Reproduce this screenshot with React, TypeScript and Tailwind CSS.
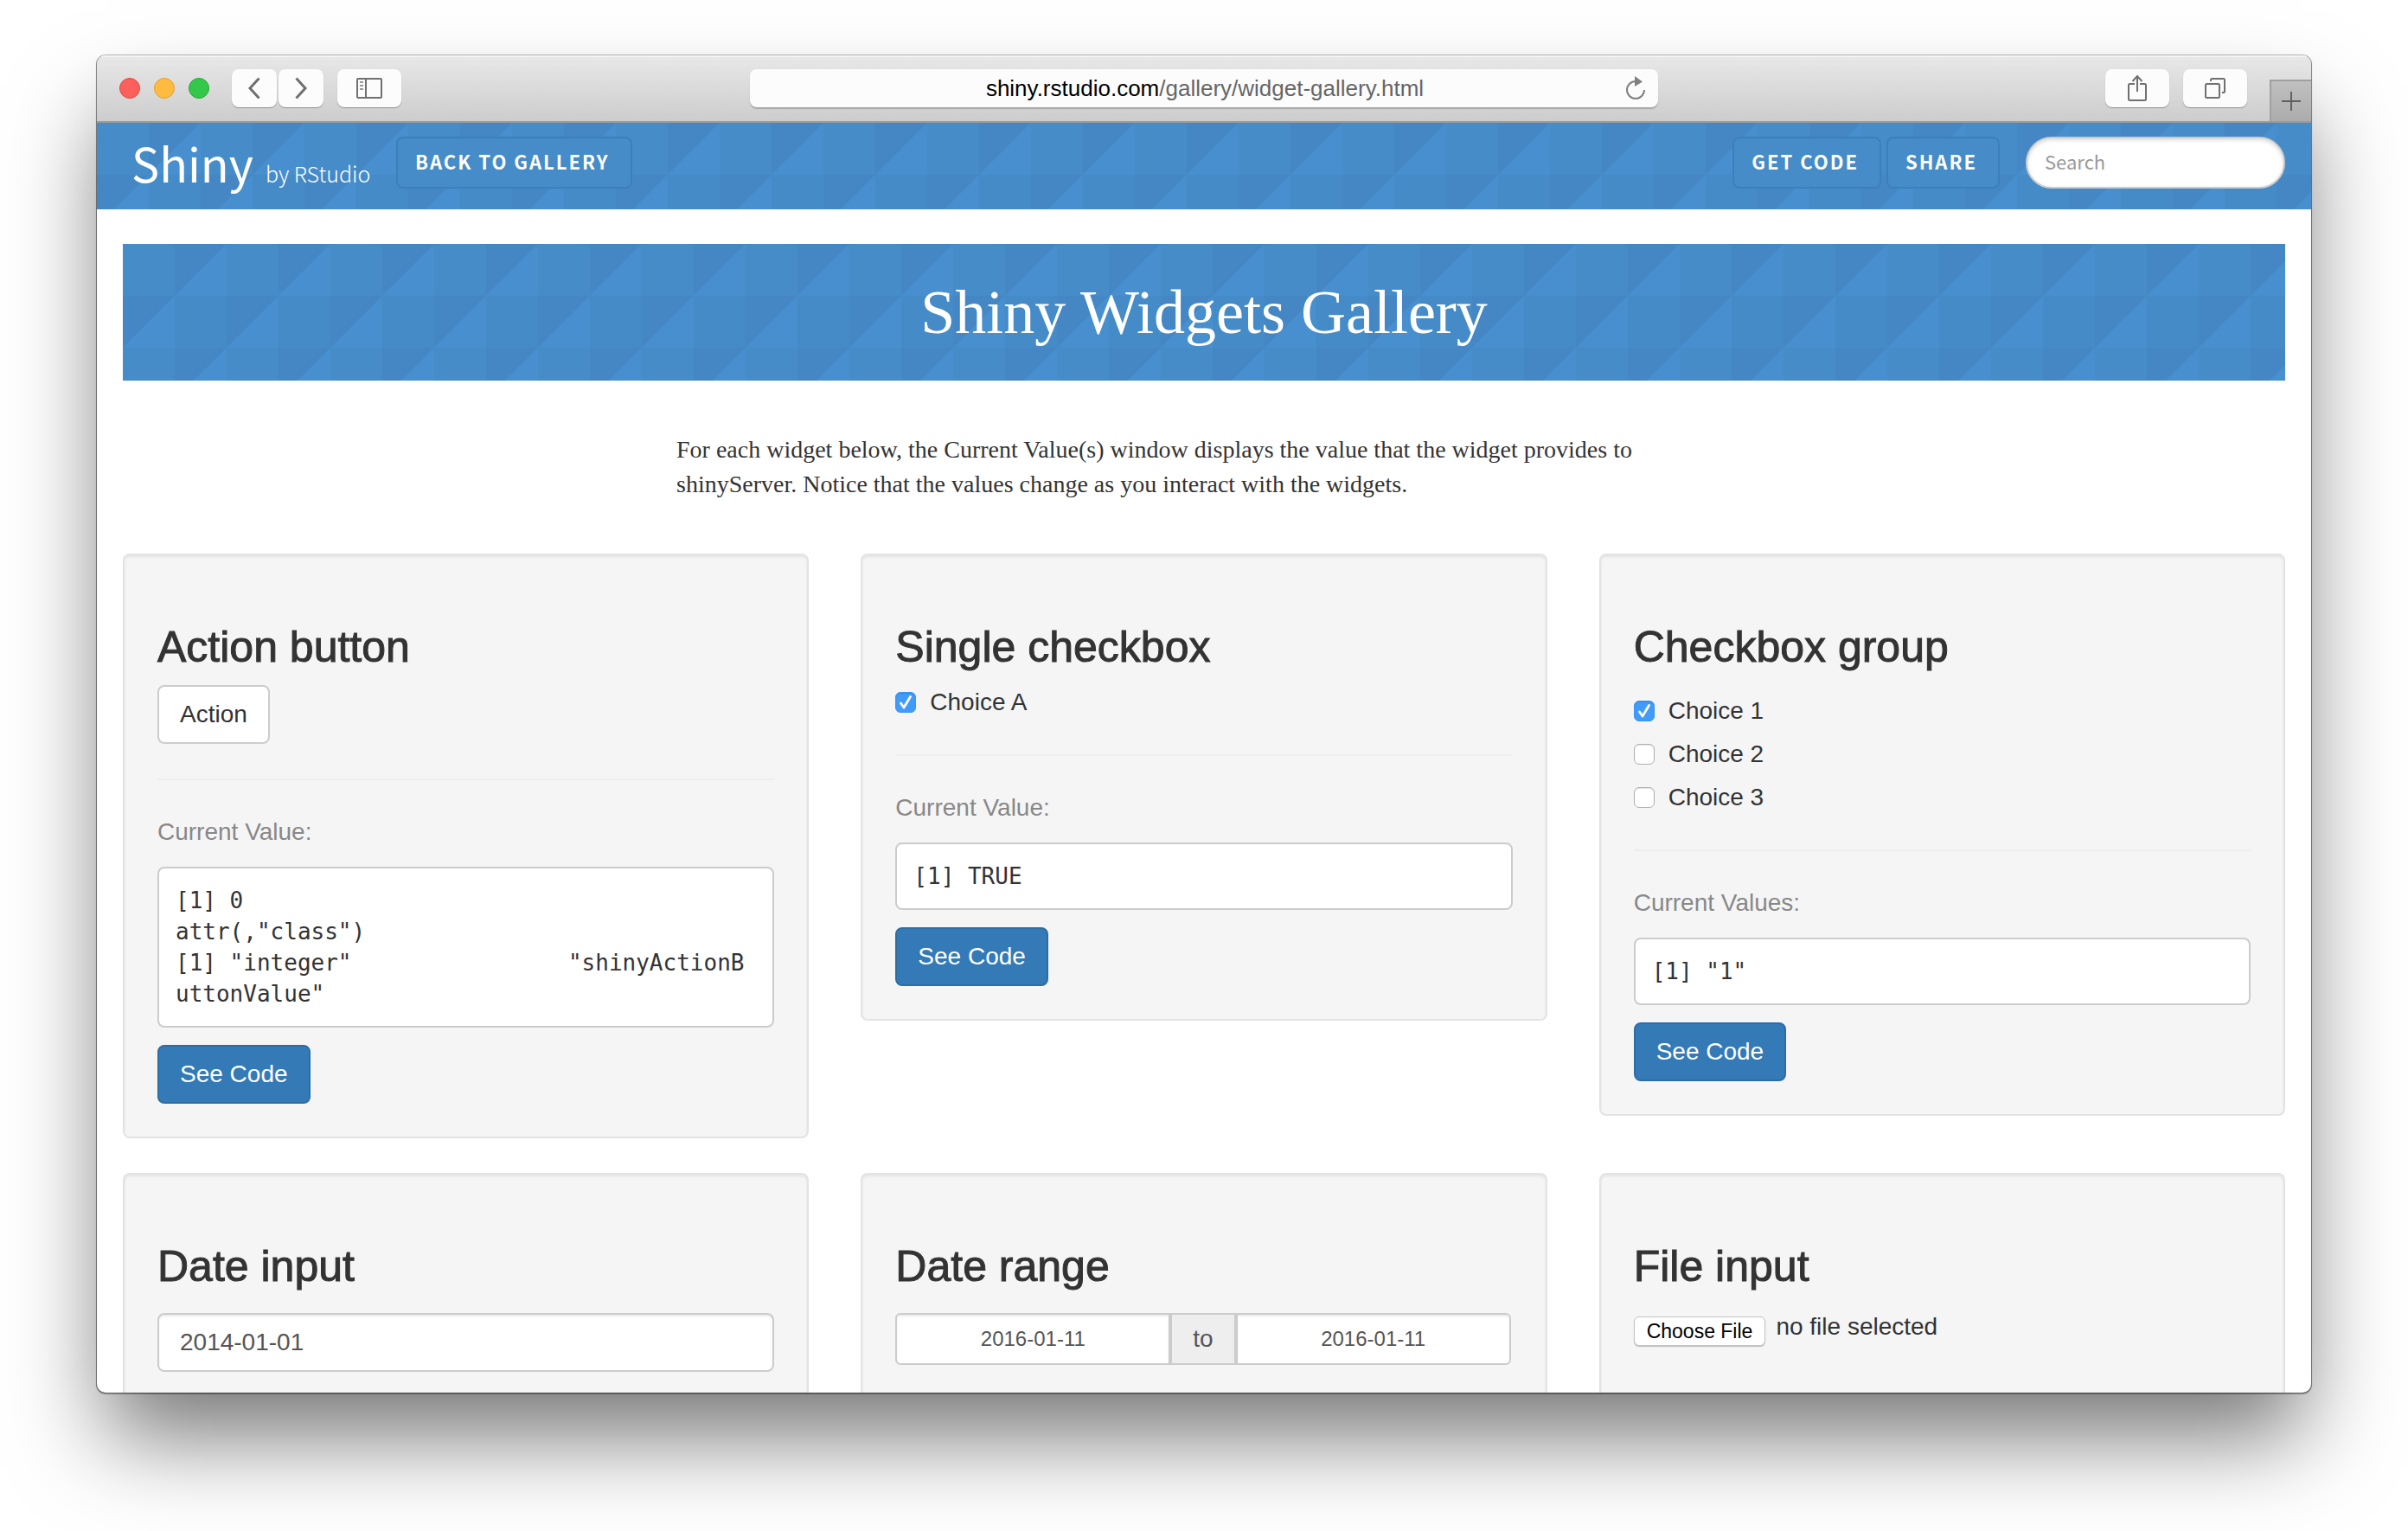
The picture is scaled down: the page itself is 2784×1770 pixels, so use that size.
import React, { useId } from "react";

const BRAND_FONT = "font-['Noto_Sans_CJK_SC','Open_Sans',sans-serif]";

/** Triangular tile texture used behind the nav bar and the page banner. */
function TriangleTexture() {
  const id = useId();
  return (
    <svg aria-hidden="true" className="absolute inset-0 size-full">
      <defs>
        <pattern id={id} width="120" height="120" patternUnits="userSpaceOnUse">
          <rect width="120" height="120" fill="#458cc8" />
          <rect x="60" y="60" width="60" height="60" fill="#448bc7" />
          <path d="M60 0H120L60 60Z" fill="#4587c4" />
          <path d="M120 0V60H60Z" fill="#478fce" />
          <path d="M0 60H60L0 120Z" fill="#4587c4" />
          <path d="M60 60V120H0Z" fill="#478fce" />
        </pattern>
      </defs>
      <rect width="100%" height="100%" fill={`url(#${id})`} />
    </svg>
  );
}

function ToolbarButton({
  label,
  className,
  children,
}: {
  label: string;
  className: string;
  children: React.ReactNode;
}) {
  return (
    <button
      type="button"
      aria-label={label}
      className={`flex h-11 items-center justify-center rounded-lg bg-[#fcfcfc] text-[#707070] shadow-[0_1px_1px_rgba(0,0,0,0.3)] ${className}`}
    >
      {children}
    </button>
  );
}

function BrowserToolbar() {
  return (
    <header className="grid h-[78px] shrink-0 grid-cols-[1fr_41%_1fr] items-center border-b-2 border-[#9b9b9b] bg-linear-to-b from-[#e8e8e8] to-[#cdcdcd] shadow-[inset_0_2px_0_#f4f4f4]">
      <div className="flex items-center pl-[26px]">
        <div className="flex gap-4">
          <span className="size-6 rounded-full border border-[#e14640] bg-[#fc605c]" />
          <span className="size-6 rounded-full border border-[#dfa033] bg-[#fdbc40]" />
          <span className="size-6 rounded-full border border-[#27a833] bg-[#34c84a]" />
        </div>
        <div className="ml-[26px] flex gap-0.5">
          <ToolbarButton label="Back" className="w-[52px]">
            <svg width="16" height="26" viewBox="0 0 16 26" fill="none" stroke="currentColor" strokeWidth="3">
              <path d="M13.500 1.500L3 13L13.500 24.500" />
            </svg>
          </ToolbarButton>
          <ToolbarButton label="Forward" className="w-[52px]">
            <svg width="16" height="26" viewBox="0 0 16 26" fill="none" stroke="currentColor" strokeWidth="3">
              <path d="M2.500 1.500L13 13L2.500 24.500" />
            </svg>
          </ToolbarButton>
        </div>
        <ToolbarButton label="Show sidebar" className="ml-4 w-[74px]">
          <svg width="30" height="24" viewBox="0 0 30 24" fill="none" stroke="currentColor" strokeWidth="2">
            <rect x="1" y="1" width="28" height="22" rx="1" />
            <path d="M11 1V23" />
            <path d="M4 5H8M4 9H8M4 13H8" strokeOpacity="0.7" />
          </svg>
        </ToolbarButton>
      </div>

      <div className="flex h-11 items-center rounded-lg bg-[#fcfcfc] pl-10 pr-3.5 shadow-[0_2px_1px_rgba(0,0,0,0.2)]">
        <a
          href="#top"
          className="flex-1 text-center font-['Liberation_Sans',Arial,sans-serif] text-[26px] leading-8 text-[#666]"
        >
          <span className="text-black">shiny.rstudio.com</span>/gallery/widget-gallery.html
        </a>
        <button type="button" aria-label="Reload" className="text-[#808080]">
          <svg width="24" height="28" viewBox="0 0 24 28" fill="none" stroke="currentColor" strokeWidth="2">
            <path d="M12 6A10 10 0 1 0 22 16" />
            <path d="M11 0L20 6.500L11 12Z" fill="currentColor" stroke="none" />
          </svg>
        </button>
      </div>

      <div className="flex h-full items-center justify-end">
        <ToolbarButton label="Share page" className="w-[74px]">
          <svg width="22" height="32" viewBox="0 0 22 32" fill="none" stroke="currentColor" strokeWidth="2">
            <path d="M8 11H2.500A1.500 1.500 0 0 0 1 12.500V28.500A1.500 1.500 0 0 0 2.500 30H19.500A1.500 1.500 0 0 0 21 28.500V12.500A1.500 1.500 0 0 0 19.500 11H14" />
            <path d="M11 20V2M5.500 8L11 2L16.500 8" />
          </svg>
        </ToolbarButton>
        <ToolbarButton label="Show all tabs" className="ml-4 w-[74px]">
          <svg width="26" height="26" viewBox="0 0 26 26" fill="none" stroke="currentColor" strokeWidth="2">
            <rect x="2" y="8" width="16" height="16" rx="1.500" />
            <path d="M8 5V3.500A1.500 1.500 0 0 1 9.500 2H22.500A1.500 1.500 0 0 1 24 3.500V16.500A1.500 1.500 0 0 1 22.500 18H21" />
          </svg>
        </ToolbarButton>
        <button
          type="button"
          aria-label="New tab"
          className="ml-[26px] flex size-12 items-center justify-center self-end border-l-2 border-t-2 border-[#a0a0a0] bg-linear-to-b from-[#c0c0c0] to-[#acacac] text-[#606060]"
        >
          <svg width="22" height="22" viewBox="0 0 22 22" stroke="currentColor" strokeWidth="2">
            <path d="M11 0V22M0 11H22" />
          </svg>
        </button>
      </div>
    </header>
  );
}

function NavButton({ children }: { children: React.ReactNode }) {
  return (
    <a
      href="#gallery"
      className={`flex h-15 items-center rounded-lg border-2 border-[#3b80bd] bg-[#458cc8] pb-1 pl-5 pr-6 text-[22px] font-bold leading-8 tracking-[2px] text-white ${BRAND_FONT}`}
    >
      {children}
    </a>
  );
}

function SiteNav() {
  return (
    <nav className="relative h-[100px] shrink-0">
      <TriangleTexture />
      <div className="relative flex items-start pl-10 pr-[30px] pt-4">
        <a href="#home" className={`flex w-[276px] items-baseline gap-3.5 whitespace-nowrap text-white ${BRAND_FONT}`}>
          <span className="text-[54px] leading-15">Shiny</span>
          <span className="text-[25px] font-light leading-8">by RStudio</span>
        </a>
        <div className="ml-[30px] flex flex-1 gap-1.5">
          <NavButton>BACK TO GALLERY</NavButton>
          <div className="flex-1" />
          <NavButton>GET CODE</NavButton>
          <NavButton>SHARE</NavButton>
          <input
            type="search"
            aria-label="Search"
            placeholder="Search"
            className={`ml-6 h-15 w-[300px] rounded-full border-2 border-[#ccc] bg-white px-5 pb-1 text-[22px] leading-8 text-[#555] shadow-[inset_0_2px_4px_rgba(0,0,0,0.15)] placeholder:text-[#999] ${BRAND_FONT}`}
          />
        </div>
      </div>
    </nav>
  );
}

function Card({
  title,
  cropped = false,
  children,
}: {
  title: string;
  cropped?: boolean;
  children: React.ReactNode;
}) {
  return (
    <section
      className={`border-2 border-[#e3e3e3] bg-[#f5f5f5] p-[38px] shadow-[inset_0_2px_3px_rgba(0,0,0,0.07)] ${
        cropped ? "h-full rounded-t-lg border-b-0" : "rounded-lg"
      }`}
    >
      <h3 className="mt-11 text-[50px] leading-12 text-[#333] [-webkit-text-stroke:1px_#333]">{title}</h3>
      {children}
    </section>
  );
}

function CurrentValue({ label = "Current Value:", output }: { label?: string; output: string }) {
  return (
    <>
      <hr className="my-10 border-t-2 border-[#eee]" />
      <p className="mb-5 text-[#888]">{label}</p>
      <pre className="mb-5 whitespace-pre-wrap break-all rounded-lg border-2 border-[#ccc] bg-white p-[19px] font-['DejaVu_Sans_Mono',monospace] text-[26px] leading-9 text-[#333]">
        {output}
      </pre>
      <button
        type="button"
        className="h-[68px] rounded-lg border-2 border-[#2e6da4] bg-[#337ab7] px-6 text-white"
      >
        See Code
      </button>
    </>
  );
}

function Checkbox({ label, checked = false }: { label: string; checked?: boolean }) {
  return (
    <label className="flex h-10 items-center gap-4">
      <span className="grid size-6 place-items-center">
        <input
          type="checkbox"
          defaultChecked={checked}
          className="peer col-start-1 row-start-1 size-6 appearance-none rounded-md border border-[#b0b0b0] bg-white shadow-[inset_0_1px_1px_rgba(0,0,0,0.12)] checked:border-[#3b94f8] checked:bg-[#419bf9]"
        />
        <svg
          aria-hidden="true"
          width="16"
          height="18"
          viewBox="0 0 16 18"
          fill="none"
          stroke="#fff"
          strokeWidth="2.800"
          strokeLinecap="round"
          strokeLinejoin="round"
          className="pointer-events-none col-start-1 row-start-1 hidden peer-checked:block"
        >
          <path d="M2.500 10L6 15L13.500 2.500" />
        </svg>
      </span>
      <span>{label}</span>
    </label>
  );
}

const ACTION_OUTPUT = `[1] 0
attr(,"class")
[1] "integer"                "shinyActionButtonValue"`;

const RANGE_INPUT =
  "h-15 min-w-0 flex-1 border-2 border-[#ccc] bg-white text-center text-2xl text-[#555] shadow-[inset_0_2px_2px_rgba(0,0,0,0.075)]";

export default function App() {
  return (
    <div className="flex h-screen flex-col bg-white px-28 pb-40 pt-16">
      <div className="flex min-h-0 flex-1 flex-col overflow-hidden rounded-[10px] bg-white shadow-[0_0_0_1px_rgba(0,0,0,0.25),0_1px_1px_1px_rgba(0,0,0,0.3),0_60px_100px_-10px_rgba(0,0,0,0.54)]">
        <BrowserToolbar />
        <SiteNav />
        <main
          id="gallery"
          className="flex min-h-0 flex-1 flex-col px-[30px] pt-10 font-['Liberation_Sans',Arial,sans-serif] text-[28px] leading-10 text-[#333]"
        >
          <div className="relative shrink-0">
            <TriangleTexture />
            <h1 className="relative py-10 text-center font-['Liberation_Serif','Times_New_Roman',serif] text-[72px] leading-[78px] text-white">
              Shiny Widgets Gallery
            </h1>
          </div>

          <p className="mx-auto my-15 w-[1220px] max-w-full font-['Liberation_Serif','Times_New_Roman',serif]">
            For each widget below, the Current Value(s) window displays the value that the widget provides to
            shinyServer. Notice that the values change as you interact with the widgets.
          </p>

          <div className="grid shrink-0 grid-cols-3 items-start gap-[60px]">
            <Card title="Action button">
              <button
                type="button"
                className="mt-5 block h-[68px] rounded-lg border-2 border-[#ccc] bg-white px-6"
              >
                Action
              </button>
              <CurrentValue output={ACTION_OUTPUT} />
            </Card>
            <Card title="Single checkbox">
              <div className="mt-5">
                <Checkbox label="Choice A" checked />
              </div>
              <CurrentValue output="[1] TRUE" />
            </Card>
            <Card title="Checkbox group">
              <div className="mt-[30px] flex flex-col gap-2.5">
                <Checkbox label="Choice 1" checked />
                <Checkbox label="Choice 2" />
                <Checkbox label="Choice 3" />
              </div>
              <CurrentValue label="Current Values:" output={'[1] "1"'} />
            </Card>
          </div>

          <div className="mt-10 grid min-h-0 flex-1 grid-cols-3 gap-[60px]">
            <Card title="Date input" cropped>
              <input
                type="text"
                aria-label="Date input"
                defaultValue="2014-01-01"
                className="mt-[30px] h-[68px] w-full rounded-lg border-2 border-[#ccc] bg-white px-6 text-[#555] shadow-[inset_0_2px_2px_rgba(0,0,0,0.075)]"
              />
            </Card>
            <Card title="Date range" cropped>
              <div className="mr-0.5 mt-[30px] flex">
                <input
                  type="text"
                  aria-label="Start date"
                  defaultValue="2016-01-11"
                  className={`rounded-l-md ${RANGE_INPUT}`}
                />
                <span className="flex h-15 items-center border-2 border-[#ccc] bg-[#eee] px-6 text-[#555]">to</span>
                <input
                  type="text"
                  aria-label="End date"
                  defaultValue="2016-01-11"
                  className={`rounded-r-md ${RANGE_INPUT}`}
                />
              </div>
            </Card>
            <Card title="File input" cropped>
              <div className="relative mt-[30px] flex items-start gap-3">
                <label className="mt-1 rounded-md border border-[#c4c4c4] bg-white px-3.5 text-[23px] leading-8 text-black shadow-[0_1px_1px_rgba(0,0,0,0.25)]">
                  Choose File
                  <input type="file" className="sr-only" />
                </label>
                <span className="leading-8">no file selected</span>
              </div>
            </Card>
          </div>
        </main>
      </div>
    </div>
  );
}
